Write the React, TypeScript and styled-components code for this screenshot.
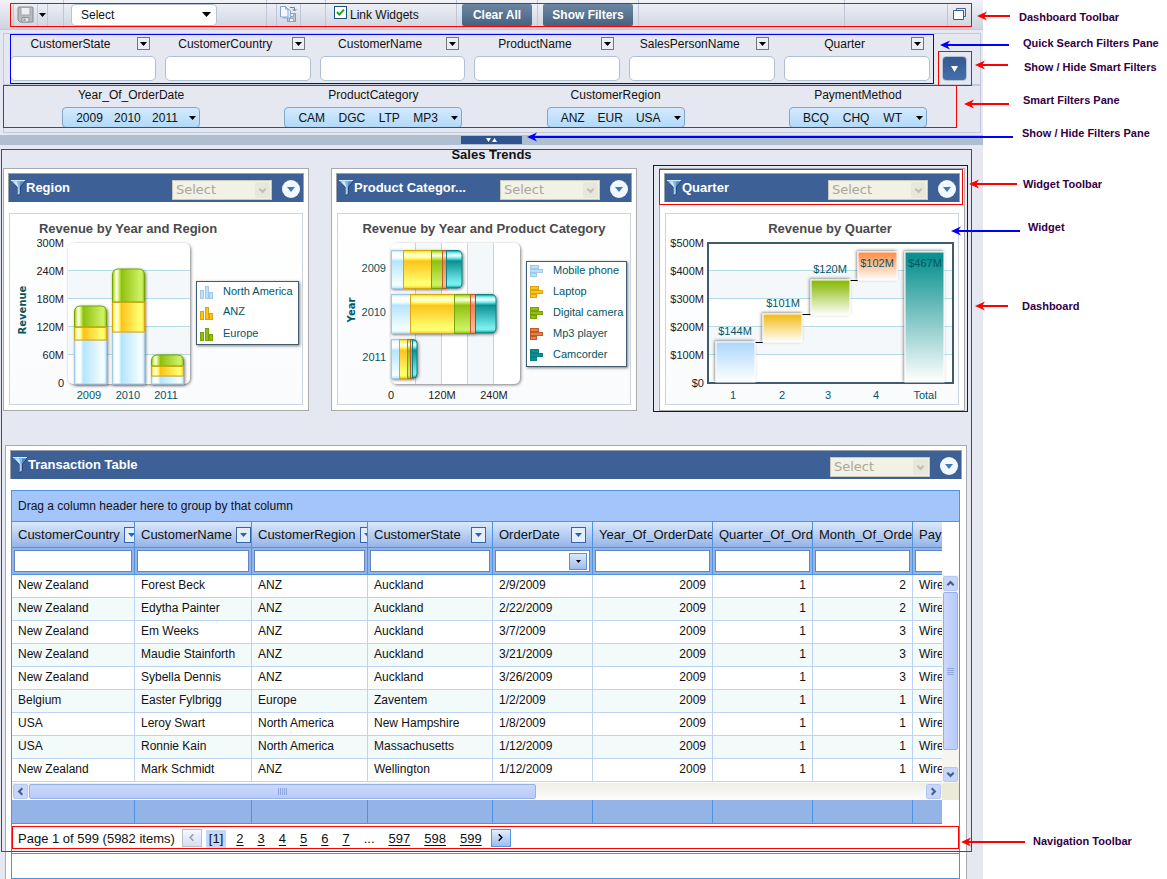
import React from 'react';
import styled, { createGlobalStyle, css } from 'styled-components';

const sans = '"Liberation Sans", Arial, sans-serif';
const wide = '"DejaVu Sans", Verdana, sans-serif';
const RED = '#ff0000';
const BLUE = '#0000ff';

const GlobalStyle = createGlobalStyle`
  *, *::before, *::after { box-sizing: border-box; }
  body { margin: 0; background: #fff; color: #111; font: 12px/16px ${sans}; }
  button, input, select { font: inherit; color: inherit; margin: 0; padding: 0; }
  button { cursor: pointer; }
  h1, h2 { margin: 0; font-weight: bold; }
`;

/* ---------- page frame ---------- */

const Page = styled.div`
  display: grid;
  grid-template-columns: minmax(0, 1fr) 184px;
`;

const Main = styled.main`
  background: #e6e8f1;
  min-width: 0;
`;

const Notes = styled.aside`
  position: relative;
`;

const Outline = styled.span<{ $color: string; $inset: string }>`
  position: absolute;
  inset: ${(p) => p.$inset};
  border: 1px solid ${(p) => p.$color};
  pointer-events: none;
  z-index: 2;
`;

const NoteText = styled.span<{ $x: number; $y: number }>`
  position: absolute;
  left: ${(p) => p.$x}px;
  top: ${(p) => p.$y - 8}px;
  font-size: 11px;
  font-weight: bold;
  color: #330044;
  white-space: nowrap;
`;

const ArrowSvg = styled.svg<{ $x: number; $y: number }>`
  position: absolute;
  left: ${(p) => p.$x}px;
  top: ${(p) => p.$y - 5}px;
  pointer-events: none;
  z-index: 3;
`;

/* ---------- toolbar ---------- */

const Toolbar = styled.header`
  position: relative;
  display: flex;
  align-items: center;
  height: 30px;
  padding-left: 13px;
  background: linear-gradient(#f2f3f8, #e2e5ee 45%, #cdd3e0);
  border-bottom: 1px solid #c3c8da;
`;

const Divider = styled.span<{ $l?: number; $r?: number }>`
  align-self: stretch;
  width: 1px;
  margin: 0 ${(p) => p.$r ?? 0}px 0 ${(p) => p.$l ?? 0}px;
  background: #c0c6d8;
`;

const Spacer = styled.span`
  flex: 1;
`;

const IconButton = styled.button<{ $w: number }>`
  display: flex;
  align-items: center;
  justify-content: center;
  width: ${(p) => p.$w}px;
  height: 22px;
  background: transparent;
  border: solid #c0c6d8;
  border-width: 0 1px 0 0;
`;

const IconGroup = styled.div`
  display: flex;
  border-left: 1px solid #c0c6d8;
`;

const WindowGroup = styled(IconGroup)`
  margin: 0 11px 0 102px;
`;

const SelectWrap = styled.div`
  display: grid;
  align-items: center;
  > * { grid-area: 1 / 1; }
  > svg, > span { justify-self: end; pointer-events: none; }
`;

const DashSelect = styled(SelectWrap)`
  width: 146px;
  > svg { margin-right: 6px; }
  select {
    appearance: none;
    width: 100%;
    height: 22px;
    padding-left: 9px;
    background: #fff;
    border: 1px solid #b8c2d6;
    border-radius: 4px;
  }
`;

const CheckLabel = styled.label`
  display: flex;
  align-items: center;
  gap: 3px;
  width: 122px;
`;

const CheckBox = styled.input`
  appearance: none;
  width: 13px;
  height: 13px;
  border: 1px solid #1c5180;
  background: #fff url("data:image/svg+xml,%3Csvg xmlns='http://www.w3.org/2000/svg' viewBox='0 0 11 11'%3E%3Cpath d='M2 5l2.3 2.6L9 2.6' fill='none' stroke='%2321a121' stroke-width='2'/%3E%3C/svg%3E") center / 11px 11px no-repeat;
  margin-bottom: 4px;
`;

const ActionButton = styled.button<{ $w: number }>`
  width: ${(p) => p.$w}px;
  height: 22px;
  border: 0;
  border-radius: 2px;
  background: linear-gradient(#6b87a4, #47627f);
  color: #fff;
  font-weight: bold;
`;

/* ---------- filters ---------- */

const FilterPane = styled.section`
  position: relative;
  height: 100px;
  margin: 3px 2px 2px 3px;
  border: 1px solid #c3c8da;
`;

const QuickRow = styled.div`
  display: flex;
  justify-content: space-between;
  align-items: flex-end;
  height: 52px;
  padding: 0 13px 3px 6px;
  border-bottom: 2px solid #c3c8da;
`;

const QuickFields = styled.div`
  display: grid;
  flex: 1;
  grid-template-columns: repeat(6, minmax(0, 1fr));
  gap: 9px;
  margin-right: 12px;
`;

const FieldHead = styled.div`
  display: flex;
  align-items: center;
  height: 16px;
  margin-bottom: 4px;
  padding-right: 6px;
  label { flex: 1; text-align: center; padding-right: 6px; }
`;

const BoxButton = styled.button`
  display: flex;
  align-items: center;
  justify-content: center;
  width: 13px;
  height: 13px;
  margin-bottom: 1px;
  border: 1px solid #777;
  background: #eceef5;
`;

const QuickInput = styled.input`
  display: block;
  width: 100%;
  height: 25px;
  padding: 0 6px;
  border: 1px solid #afc0d2;
  border-radius: 5px;
  background: #fff;
`;

const ToggleWrap = styled.div`
  position: relative;
`;

const ToggleButton = styled.button`
  display: flex;
  align-items: center;
  justify-content: center;
  width: 25px;
  height: 25px;
  border: 1px solid #b4c2d8;
  border-radius: 4px;
  background: linear-gradient(#35588f, #456fab);
`;

const SmartRow = styled.div`
  display: grid;
  grid-template-columns: repeat(4, minmax(0, 1fr));
  padding: 0 1px 0 6px;
`;

const SmartFilter = styled.div`
  display: flex;
  flex-direction: column;
  align-items: center;
  gap: 4px;
  padding-top: 1px;
`;

const Pill = styled.button<{ $w: number }>`
  display: flex;
  align-items: center;
  justify-content: space-between;
  width: ${(p) => p.$w}px;
  height: 21px;
  padding: 0 3px 0 13px;
  border: 1px solid #7fa6cc;
  border-radius: 4px;
  background: linear-gradient(#d3eaff, #b3d9f8);
`;

const Splitter = styled.div`
  display: flex;
  justify-content: center;
  align-items: center;
  height: 10px;
  background: #aebfd0;
`;

const SplitHandle = styled.button`
  display: flex;
  justify-content: center;
  align-items: center;
  width: 61px;
  height: 8px;
  border: 0;
  background: #2f5490;
`;

/* ---------- widgets ---------- */

const Dashboard = styled.section`
  position: relative;
`;

const DashTitle = styled.h1`
  height: 23px;
  padding-top: 2px;
  font-size: 13px;
  line-height: 16px;
  text-align: center;
`;

const WidgetRow = styled.div`
  display: grid;
  grid-template-columns: repeat(3, minmax(0, 1fr));
  gap: 22px;
  padding: 0 18px 34px 3px;
`;

const WidgetBox = styled.article`
  position: relative;
  min-width: 0;
  padding: 4px 4px 5px;
  border: 1px solid #aaa;
  background: #fff;
`;

const WidgetHead = styled.div`
  display: flex;
  align-items: center;
  height: 29px;
  margin-bottom: 11px;
  padding: 0 3px 0 2px;
  border: solid #9aa0aa;
  border-width: 1px 1px 0 1px;
  background: #3d6096;
  color: #fff;
`;

const WidgetTitle = styled.h2`
  flex: 1;
  font-size: 13px;
  line-height: 18px;
  white-space: nowrap;
`;

const DisabledSelect = styled(SelectWrap)`
  width: 100px;
  margin: 4px 10px 0 0;
  select {
    appearance: none;
    width: 100%;
    height: 20px;
    padding-left: 3px;
    border: 1px solid #c9c7ba;
    border-radius: 0;
    background: #f2f1e6;
    color: #aca899;
    opacity: 1;
    font-family: ${wide};
    font-size: 13px;
  }
  > span {
    display: flex;
    align-items: center;
    justify-content: center;
    width: 15px;
    height: 16px;
    margin-right: 2px;
    background: #e8e7dc;
    border-radius: 2px;
  }
`;

const RoundButton = styled.button`
  display: flex;
  align-items: center;
  justify-content: center;
  width: 18px;
  height: 18px;
  margin-top: 2px;
  border: 0;
  border-radius: 50%;
  background: #f1f8ff;
`;

const ChartPanel = styled.div`
  height: 192px;
  margin: 0 1px;
  border: 1px solid #cbd3dc;
  background: linear-gradient(#fff, #fafbfd);
  svg { display: block; }
`;

/* ---------- transaction grid ---------- */

const TableWidget = styled(WidgetBox)`
  margin: 0 16px 0 5px;
  padding-bottom: 0;
  border-bottom: 0;
`;

const Grid = styled.div`
  position: relative;
  margin: 0 2px 0 1px;
  border: 1px solid #4d92e3;
`;

const GroupPanel = styled.div`
  display: flex;
  align-items: center;
  height: 31px;
  padding-left: 6px;
  border-bottom: 1px solid #4d92e3;
  background: #a4c5fa;
`;

const GridArea = styled.div`
  display: grid;
  grid-template-columns: minmax(0, 1fr) 17px;
`;

const TableClip = styled.div`
  overflow: hidden;
  height: 261px;
`;

const Table = styled.table`
  width: 100%;
  min-width: 931px;
  table-layout: fixed;
  border-collapse: separate;
  border-spacing: 0;
`;

const HeadCell = styled.th`
  height: 26px;
  padding: 0;
  border: solid #4d92e3;
  border-width: 0 1px 1px 0;
  background: linear-gradient(#dbe9fb, #94b4e8);
  font-weight: normal;
  font-size: 13px;
  text-align: left;
  &:last-child { border-right: 0; }
`;

const HeadInner = styled.div`
  display: flex;
  align-items: center;
  gap: 4px;
  overflow: hidden;
  padding: 0 6px;
  white-space: nowrap;
`;

const HeadButton = styled.button`
  display: flex;
  flex: none;
  align-items: center;
  justify-content: center;
  width: 15px;
  height: 16px;
  margin-left: auto;
  border: 1px solid #3564ac;
  background: #e3eefd;
`;

const FilterCell = styled.td`
  height: 27px;
  padding: 2px;
  border: solid #4d92e3;
  border-width: 0 1px 1px 0;
  background: #94b4e8;
  &:last-child { border-right: 0; padding-right: 0; }
`;

const FilterBox = styled.div<{ $open?: boolean }>`
  display: flex;
  align-items: center;
  height: 22px;
  padding-right: 2px;
  border: 1px solid #5f86c9;
  ${(p) => p.$open && css`border-right: 0;`}
  background: #fff;
  input { flex: 1; min-width: 0; width: 0; height: 18px; border: 0; outline: 0; background: none; }
`;

const DateButton = styled.button`
  display: flex;
  align-items: center;
  justify-content: center;
  width: 18px;
  height: 17px;
  border: 1px solid #5f8fd6;
  background: linear-gradient(#dbe9fb, #9dbdf0);
`;

const Row = styled.tr<{ $alt: boolean }>`
  background: ${(p) => (p.$alt ? '#f3fafa' : '#fff')};
`;

const Cell = styled.td<{ $num?: boolean }>`
  height: 23px;
  padding: 0 6px 1px;
  border: solid #bdd3f2;
  border-width: 0 1px 1px 0;
  line-height: 21px;
  white-space: nowrap;
  overflow: hidden;
  text-align: ${(p) => (p.$num ? 'right' : 'left')};
  &:last-child { border-right: 0; }
`;

const VBar = styled.div`
  display: flex;
  flex-direction: column;
  align-items: center;
  height: 208px;
  margin-top: 53px;
  padding: 1px 0;
  background: #f6f5f0;
`;

const HBar = styled.div`
  display: flex;
  align-items: center;
  height: 17px;
  padding: 0 1px;
  background: linear-gradient(#eeede5, #fdfdfb);
`;

const ScrollButton = styled.button`
  display: flex;
  flex: none;
  align-items: center;
  justify-content: center;
  width: 15px;
  height: 15px;
  border: 1px solid #b5c7f2;
  border-radius: 2px;
  background: #c8d6fb;
`;

const HThumb = styled.div`
  display: flex;
  align-items: center;
  justify-content: center;
  gap: 1px;
  width: 507px;
  height: 15px;
  margin: 0 auto 0 1px;
  border: 1px solid #98b0e4;
  border-radius: 2px;
  background: linear-gradient(#cad8fd, #b7cbf8);
  i { width: 1px; height: 7px; background: #8fa9e0; }
`;

const VThumb = styled.div`
  display: flex;
  flex-direction: column;
  align-items: center;
  justify-content: center;
  gap: 1px;
  width: 15px;
  height: 158px;
  margin: 1px 0 auto;
  border: 1px solid #98b0e4;
  border-radius: 2px;
  background: linear-gradient(90deg, #cad8fd, #b7cbf8);
  i { width: 7px; height: 1px; background: #8fa9e0; }
`;

const Corner = styled.div`
  background: #ece9d8;
`;

const FootRow = styled.div`
  display: flex;
  overflow: hidden;
  height: 24px;
  border-bottom: 1px solid #4d92e3;
  background: #94b4e8;
`;

const FootCell = styled.span<{ $w: number }>`
  flex: none;
  width: ${(p) => p.$w}px;
  border-right: 1px solid #4d92e3;
`;

const Pager = styled.nav`
  position: relative;
  display: flex;
  align-items: center;
  height: 30px;
  padding: 0 6px;
  border-bottom: 1px solid #4d92e3;
  font-size: 13px;
`;

const PageStatus = styled.span`
  margin-right: 7px;
`;

const PageLinks = styled.div`
  display: flex;
  margin: 1px 2px 0 4px;
  line-height: 18px;
`;

const PageLink = styled.a`
  padding: 0 7px;
  color: #111;
  text-decoration: underline;
  text-underline-offset: 2px;
`;

const PageGap = styled.span`
  padding: 0 7px;
`;

const CurrentPage = styled.b`
  margin-right: 3px;
  padding: 0 3px;
  font-weight: normal;
  background: #c3d8f8;
`;

const PageButton = styled.button`
  display: flex;
  align-items: center;
  justify-content: center;
  width: 20px;
  height: 18px;
  margin-bottom: 2px;
  border: 1px solid #5a93dd;
  background: linear-gradient(#e3effd, #9dbdf0);
  &:disabled { border-color: #c0c0c0; background: linear-gradient(#f4f8fe, #d3dff2); }
`;

const BottomBar = styled.div`
  height: 24px;
`;

/* ---------- small drawings ---------- */

const Tri = ({ c = '#000', w = 7, h = 4 }: { c?: string; w?: number; h?: number }) => (
  <svg width={w} height={h} viewBox="0 0 7 4" preserveAspectRatio="none" aria-hidden>
    <path d="M0 0h7L3.500 4z" fill={c} />
  </svg>
);

const Chevron = ({ turn = 0, c = '#44608f', s = 9, w = 2.4 }: { turn?: number; c?: string; s?: number; w?: number }) => (
  <svg width={s} height={s} viewBox="0 0 10 10" aria-hidden>
    <path d="M1.500 3l3.500 3.500L8.500 3" fill="none" stroke={c} strokeWidth={w} transform={`rotate(${turn} 5 5)`} />
  </svg>
);

const Funnel = () => (
  <svg width="15" height="16" viewBox="0 0 15 16" aria-hidden>
    <path d="M1 1h13.500L9.500 7.500V14L6.500 16V8z" fill="#1b2f4e" />
    <path d="M0 0.500h14L9 7v7l-2.500 1V7z" fill="#7fb8ee" />
    <path d="M2 1.500h4l1.500 5.500v7l-0.500 0.500V7.500z" fill="#c9e6ff" />
    <path d="M9.500 1.500h3.500L8.500 7z" fill="#4a83c2" />
    <path d="M0 0.500h14" stroke="#d5ecff" />
  </svg>
);

const SaveIcon = () => (
  <svg width="17" height="17" viewBox="0 0 17 17" aria-hidden>
    <path d="M1 2q0-1 1-1h13q1 0 1 1v14H3l-2-2z" fill="#b9bbbe" stroke="#85888c" />
    <path d="M4 1.500h9v7.500H4z" fill="#eceef0" stroke="#a1a4a8" />
    <path d="M5 11.500h7V16H5z" fill="#e2e4e7" stroke="#909397" />
    <path d="M6.500 12.500h2V15h-2z" fill="#9a9da1" />
  </svg>
);

const CopyIcon = () => (
  <svg width="17" height="17" viewBox="0 0 17 17" aria-hidden>
    <path d="M7.500 7.500h8v8h-8z" fill="#c3c8d0" stroke="#8e99ab" />
    <path d="M9.500 7.500h4v3h-4zM9.500 12.500h4v3h-4z" fill="#f2f4f8" stroke="#98a3b5" />
    <path d="M3.500 2.500h4.500l2.500 2.500v7h-7z" fill="#e4f0ff" stroke="#86a5cf" />
    <path d="M0.500 0.500h5l2.500 2.500v8h-7.500z" fill="#f4f9ff" stroke="#86a5cf" />
    <path d="M5.500 0.500v2.500h2.500" fill="none" stroke="#86a5cf" />
    <path d="M10 1.500h4.500v3M12.500 3l2 2 2-2" fill="none" stroke="#5f86ba" />
  </svg>
);

const WindowsIcon = () => (
  <svg width="14" height="13" viewBox="0 0 14 13" aria-hidden>
    <path d="M3.500 2.500v-2h9v8h-2" fill="none" stroke="#46658f" />
    <path d="M0.500 2.500h10v9h-10z" fill="#fff" stroke="#3b5c8a" />
  </svg>
);

const Arrow = ({ x, y, w, c }: { x: number; y: number; w: number; c: string }) => (
  <ArrowSvg $x={x} $y={y} width={w} height={10} viewBox={`0 0 ${w} 10`} aria-hidden>
    <path d={`M5 5H${w}`} stroke={c} strokeWidth={2} />
    <path d="M0 5L10 0.500L7 5L10 9.500z" fill={c} />
  </ArrowSvg>
);

/* ---------- charts ---------- */

const AXIS = { fontSize: 11, fontFamily: sans, fill: '#222' } as const;
const TEAL = { fontSize: 11, fontFamily: sans, fill: '#045664' } as const;

const ChartHeading = ({ x, children }: { x: number; children: string }) => (
  <text x={x} y={19} textAnchor="middle" fontFamily={sans} fontWeight="bold" fontSize={13} fill="#4a4a4a">
    {children}
  </text>
);

type Hue = { id: string; edge: string; dark: string; light: string };
const HUES: Hue[] = [
  { id: 'sky', edge: '#a3c8e8', dark: '#b5e4ff', light: '#f2fdff' },
  { id: 'gold', edge: '#dba60c', dark: '#ffc31a', light: '#ffff70' },
  { id: 'lime', edge: '#77a305', dark: '#8fc010', light: '#cbf060' },
  { id: 'coral', edge: '#c05a28', dark: '#e5804e', light: '#ffb894' },
  { id: 'sea', edge: '#0b8080', dark: '#0a9090', light: '#78eeee' },
];

const BarDefs = ({ name, vertical }: { name: string; vertical?: boolean }) => (
  <defs>
    {HUES.map((h) => (
      <linearGradient key={h.id} id={`${name}-${h.id}`} x1="0" y1="0" x2={vertical ? 0 : 1} y2={vertical ? 1 : 0}>
        <stop offset="0" stopColor={h.dark} />
        <stop offset="0.06" stopColor={h.light} />
        <stop offset="0.13" stopColor="#fff" />
        <stop offset="0.2" stopColor={h.light} />
        <stop offset="0.28" stopColor={h.dark} />
        <stop offset="0.85" stopColor={h.light} />
        <stop offset="0.92" stopColor={h.light} />
        <stop offset="1" stopColor={h.dark} />
      </linearGradient>
    ))}
    <filter id={`${name}-shadow`} x="-20%" y="-20%" width="140%" height="140%">
      <feDropShadow dx="1" dy="1" stdDeviation="1.5" floodColor="#000" floodOpacity="0.5" />
    </filter>
  </defs>
);

const REGION_BARS = [
  { x: 64, cuts: [170, 126, 113, 92], label: '2009', tx: 79 },
  { x: 102, cuts: [170, 118, 88, 55], label: '2010', tx: 118 },
  { x: 141, cuts: [170, 162, 152, 141], label: '2011', tx: 156 },
];

const ColumnsMark = ({ x, y, hue }: { x: number; y: number; hue: Hue }) => (
  <g fill={hue.dark} stroke={hue.edge}>
    <rect x={x + 0.5} y={y - 2.5} width={3} height={8} />
    <rect x={x + 5.5} y={y - 6.5} width={3} height={12} />
    <rect x={x + 9.5} y={y - 0.5} width={3} height={6} />
  </g>
);

const RegionChart = () => (
  <svg width="292" height="190" viewBox="0 0 292 190" role="img" aria-label="Revenue by Year and Region">
    <BarDefs name="rc" />
    <ChartHeading x={118}>Revenue by Year and Region</ChartHeading>
    <rect x={58} y={29} width={122} height={141} rx={6} fill="#fff" filter="url(#rc-shadow)" />
    {[57, 113].map((y) => <rect key={y} x={58} y={y} width={122} height={28} fill="#f4f8fa" />)}
    {[56.5, 84.5, 112.5, 140.5].map((y) => <path key={y} d={`M58 ${y}H180`} stroke="#b3dce4" />)}
    {['300M', '240M', '180M', '120M', '60M', '0'].map((t, i) => (
      <text key={t} {...AXIS} x={54} y={33 + i * 28} textAnchor="end">{t}</text>
    ))}
    <text {...TEAL} fontWeight="bold" fontFamily={wide} fontSize={10} textAnchor="middle" transform="translate(16 96) rotate(-90)">Revenue</text>
    {REGION_BARS.map((b) => {
      const [base, c1, c2, top] = b.cuts;
      return (
        <g key={b.label}>
          <g filter="url(#rc-shadow)">
            <rect x={b.x + 0.5} y={c1} width={32} height={base - c1} fill="url(#rc-sky)" stroke={HUES[0].edge} />
            <rect x={b.x + 0.5} y={c2} width={32} height={c1 - c2} fill="url(#rc-gold)" stroke={HUES[1].edge} />
            <path
              d={`M${b.x + 0.5} ${c2}V${top + 6}q0 -6 6 -6h20q6 0 6 6V${c2}z`}
              fill="url(#rc-lime)"
              stroke={HUES[2].edge}
            />
            <path d={`M${b.x} ${c2}h33`} stroke={HUES[1].edge} />
          </g>
          <text {...TEAL} x={b.tx} y={185} textAnchor="middle">{b.label}</text>
        </g>
      );
    })}
    <rect x={186.5} y={67.5} width={102} height={63} fill="#fff" stroke="#3f5b73" filter="url(#rc-shadow)" />
    {['North America', 'ANZ', 'Europe'].map((t, i) => (
      <g key={t}>
        <ColumnsMark x={190} y={[79, 100, 121][i]} hue={HUES[i]} />
        <text {...TEAL} x={213} y={[81, 101, 123][i]}>{t}</text>
      </g>
    ))}
  </svg>
);

const PRODUCT_BARS = [
  { y: 36, h: 38, cuts: [53, 65, 93, 104, 108, 124], label: '2009' },
  { y: 80, h: 39, cuts: [53, 72, 116, 132, 137, 158], label: '2010' },
  { y: 125, h: 39, cuts: [53, 61, 69, 72, 74, 79], label: '2011' },
];

const ProductChart = () => (
  <svg width="292" height="190" viewBox="0 0 292 190" role="img" aria-label="Revenue by Year and Product Category">
    <BarDefs name="pc" vertical />
    <ChartHeading x={146}>Revenue by Year and Product Category</ChartHeading>
    <rect x={53} y={29} width={129} height={141} rx={6} fill="#fff" filter="url(#pc-shadow)" />
    {[78, 130].map((x) => <rect key={x} x={x} y={29} width={25} height={141} fill="#f4f8fa" />)}
    {[77.5, 103.5, 129.5, 155.5].map((x) => <path key={x} d={`M${x} 29V170`} stroke="#b3dce4" />)}
    {PRODUCT_BARS.map((b) => {
      const end = b.cuts[5];
      const r = Math.min(5, end - b.cuts[4] - 1);
      return (
        <g key={b.label}>
          <g filter="url(#pc-shadow)">
            {HUES.slice(0, 4).map((h, i) => (
              <rect key={h.id} x={b.cuts[i] + 0.5} y={b.y + 0.5} width={b.cuts[i + 1] - b.cuts[i]} height={b.h} fill={`url(#pc-${h.id})`} stroke={h.edge} />
            ))}
            <path
              d={`M${b.cuts[4] + 0.5} ${b.y + 0.5}H${end - r}q${r} 0 ${r} ${r}V${b.y + b.h - r}q0 ${r} ${-r} ${r}H${b.cuts[4] + 0.5}z`}
              fill="url(#pc-sea)"
              stroke={HUES[4].edge}
            />
          </g>
          <text {...TEAL} x={48} y={b.y + 22} textAnchor="end">{b.label}</text>
        </g>
      );
    })}
    <text {...TEAL} fontWeight="bold" fontFamily={wide} fontSize={10} textAnchor="middle" transform="translate(17 96) rotate(-90)">Year</text>
    {['0', '120M', '240M'].map((t, i) => (
      <text key={t} {...AXIS} x={[53, 104, 156][i]} y={185} textAnchor="middle">{t}</text>
    ))}
    <rect x={188.5} y={47.5} width={100} height={105} fill="#fff" stroke="#3f5b73" filter="url(#pc-shadow)" />
    {['Mobile phone', 'Laptop', 'Digital camera', 'Mp3 player', 'Camcorder'].map((t, i) => (
      <g key={t}>
        <g fill={HUES[i].dark} stroke={HUES[i].edge}>
          <rect x={192.5} y={51.5 + i * 21} width={8} height={3} />
          <rect x={192.5} y={55.5 + i * 21} width={12} height={3} />
          <rect x={192.5} y={59.5 + i * 21} width={6} height={3} />
        </g>
        <text {...TEAL} x={215} y={60 + i * 21}>{t}</text>
      </g>
    ))}
  </svg>
);

const STEPS = [
  { x: 50, top: 128, bottom: 168, c: '#b0d8fa', label: '$144M', tx: 69, ty: 121, name: '1', nx: 67 },
  { x: 97, top: 100, bottom: 128, c: '#f3bd1c', label: '$101M', tx: 117, ty: 93, name: '2', nx: 116 },
  { x: 145, top: 66, bottom: 101, c: '#8aba08', label: '$120M', tx: 164, ty: 59, name: '3', nx: 162 },
  { x: 192, top: 38, bottom: 66, c: '#ff8f4d', label: '$102M', tx: 211, ty: 53, name: '4', nx: 210 },
  { x: 239, top: 38, bottom: 168, c: '#0a9190', label: '$467M', tx: 259, ty: 53, name: 'Total', nx: 259 },
];

const QuarterChart = () => (
  <svg width="292" height="190" viewBox="0 0 292 190" role="img" aria-label="Revenue by Quarter">
    <defs>
      {STEPS.map((s) => (
        <linearGradient key={s.name} id={`qc-${s.name}`} x1="0" y1="0" x2="0" y2="1">
          <stop offset="0.05" stopColor={s.c} />
          <stop offset="1" stopColor="#fff" />
        </linearGradient>
      ))}
      <filter id="qc-shadow" x="-20%" y="-20%" width="140%" height="140%">
        <feDropShadow dx="-1" dy="-1" stdDeviation="1.5" floodColor="#000" floodOpacity="0.5" />
      </filter>
    </defs>
    <ChartHeading x={164}>Revenue by Quarter</ChartHeading>
    <rect x={42} y={29} width={245} height={140} fill="#fff" stroke="#3f5b6f" strokeWidth={2} />
    {[57, 113].map((y) => <rect key={y} x={43} y={y} width={243} height={28} fill="#f4f8fa" />)}
    {[56.5, 84.5, 112.5, 140.5].map((y) => <path key={y} d={`M43 ${y}H286`} stroke="#b3dce4" />)}
    {['$500M', '$400M', '$300M', '$200M', '$100M', '$0'].map((t, i) => (
      <text key={t} {...AXIS} x={38} y={33 + i * 28} textAnchor="end">{t}</text>
    ))}
    <path d="M89 128.500h8M136 100.500h9M184 66.500h8" stroke="#000" />
    {STEPS.map((s) => (
      <g key={s.name}>
        <rect x={s.x} y={s.top} width={39} height={s.bottom - s.top} fill={`url(#qc-${s.name})`} stroke="#fff" filter="url(#qc-shadow)" />
        <text {...TEAL} x={s.tx} y={s.ty} textAnchor="middle">{s.label}</text>
        <text {...TEAL} x={s.nx} y={185} textAnchor="middle">{s.name}</text>
      </g>
    ))}
  </svg>
);

/* ---------- data ---------- */

const QUICK = ['CustomerState', 'CustomerCountry', 'CustomerName', 'ProductName', 'SalesPersonName', 'Quarter'];

const SMART = [
  { title: 'Year_Of_OrderDate', items: ['2009', '2010', '2011'], w: 138 },
  { title: 'ProductCategory', items: ['CAM', 'DGC', 'LTP', 'MP3'], w: 178 },
  { title: 'CustomerRegion', items: ['ANZ', 'EUR', 'USA'], w: 138 },
  { title: 'PaymentMethod', items: ['BCQ', 'CHQ', 'WT'], w: 138 },
];

const COLUMNS = [
  { name: 'CustomerCountry', w: 123, menu: true },
  { name: 'CustomerName', w: 117, menu: true },
  { name: 'CustomerRegion', w: 116, menu: true },
  { name: 'CustomerState', w: 125, menu: true },
  { name: 'OrderDate', w: 100, menu: true },
  { name: 'Year_Of_OrderDate', w: 120 },
  { name: 'Quarter_Of_OrderDate', w: 100 },
  { name: 'Month_Of_OrderDate', w: 100 },
  { name: 'PaymentMethod', w: 0 },
];

const ROWS: string[][] = [
  ['New Zealand', 'Forest Beck', 'ANZ', 'Auckland', '2/9/2009', '2009', '1', '2'],
  ['New Zealand', 'Edytha Painter', 'ANZ', 'Auckland', '2/22/2009', '2009', '1', '2'],
  ['New Zealand', 'Em Weeks', 'ANZ', 'Auckland', '3/7/2009', '2009', '1', '3'],
  ['New Zealand', 'Maudie Stainforth', 'ANZ', 'Auckland', '3/21/2009', '2009', '1', '3'],
  ['New Zealand', 'Sybella Dennis', 'ANZ', 'Auckland', '3/26/2009', '2009', '1', '3'],
  ['Belgium', 'Easter Fylbrigg', 'Europe', 'Zaventem', '1/2/2009', '2009', '1', '1'],
  ['USA', 'Leroy Swart', 'North America', 'New Hampshire', '1/8/2009', '2009', '1', '1'],
  ['USA', 'Ronnie Kain', 'North America', 'Massachusetts', '1/12/2009', '2009', '1', '1'],
  ['New Zealand', 'Mark Schmidt', 'ANZ', 'Wellington', '1/12/2009', '2009', '1', '1'],
];

const NOTES = [
  { text: 'Dashboard Toolbar', x: 36, y: 17, ax: -6, ay: 16, aw: 33, c: RED },
  { text: 'Quick Search Filters Pane', x: 40, y: 43, ax: -43, ay: 45, aw: 69, c: BLUE },
  { text: 'Show / Hide Smart Filters', x: 41, y: 67, ax: -8, ay: 65, aw: 33, c: RED },
  { text: 'Smart Filters Pane', x: 40, y: 100, ax: -19, ay: 104, aw: 45, c: RED },
  { text: 'Show / Hide Filters Pane', x: 39, y: 133, ax: -456, ay: 137, aw: 486, c: BLUE },
  { text: 'Widget Toolbar', x: 40, y: 184, ax: -14, ay: 184, aw: 48, c: RED },
  { text: 'Widget', x: 45, y: 227, ax: -32, ay: 231, aw: 69, c: BLUE },
  { text: 'Dashboard', x: 39, y: 306, ax: -8, ay: 306, aw: 33, c: RED },
  { text: 'Navigation Toolbar', x: 50, y: 841, ax: -22, ay: 842, aw: 64, c: RED },
];

/* ---------- parts ---------- */

const WidgetBar = ({ title }: { title: string }) => (
  <WidgetHead>
    <Funnel />
    <WidgetTitle>{title}</WidgetTitle>
    <DisabledSelect>
      <select disabled aria-label={`${title} view`}>
        <option>Select</option>
      </select>
      <span><Chevron c="#c2c0b4" /></span>
    </DisabledSelect>
    <RoundButton aria-label={`${title} menu`}><Tri c="#3c7dbd" w={8} h={5} /></RoundButton>
  </WidgetHead>
);

const TransactionGrid = () => (
  <Grid>
    <GroupPanel>Drag a column header here to group by that column</GroupPanel>
    <GridArea>
      <TableClip>
        <Table>
          <colgroup>
            {COLUMNS.map((c) => <col key={c.name} style={c.w ? { width: c.w } : undefined} />)}
          </colgroup>
          <thead>
            <tr>
              {COLUMNS.map((c) => (
                <HeadCell key={c.name} scope="col">
                  <HeadInner>
                    {c.name}
                    {c.menu && <HeadButton aria-label={`Filter ${c.name}`}><Tri c="#2f62ad" /></HeadButton>}
                  </HeadInner>
                </HeadCell>
              ))}
            </tr>
            <tr>
              {COLUMNS.map((c) => (
                <FilterCell key={c.name}>
                  <FilterBox $open={!c.w}>
                    <input aria-label={`${c.name} value`} />
                    {c.name === 'OrderDate' && <DateButton aria-label="Pick a date"><Tri w={5} h={3} /></DateButton>}
                  </FilterBox>
                </FilterCell>
              ))}
            </tr>
          </thead>
          <tbody>
            {ROWS.map((r, i) => (
              <Row key={i} $alt={i % 2 === 1}>
                {r.map((v, j) => <Cell key={j} $num={j > 4}>{v}</Cell>)}
                <Cell>Wire Transfer</Cell>
              </Row>
            ))}
          </tbody>
        </Table>
      </TableClip>
      <VBar>
        <ScrollButton aria-label="Scroll up"><Chevron turn={180} /></ScrollButton>
        <VThumb><i /><i /><i /><i /></VThumb>
        <ScrollButton aria-label="Scroll down"><Chevron /></ScrollButton>
      </VBar>
      <HBar>
        <ScrollButton aria-label="Scroll left"><Chevron turn={90} /></ScrollButton>
        <HThumb><i /><i /><i /><i /><i /></HThumb>
        <ScrollButton aria-label="Scroll right"><Chevron turn={-90} /></ScrollButton>
      </HBar>
      <Corner />
      <FootRow>
        {COLUMNS.filter((c) => c.w).map((c) => <FootCell key={c.name} $w={c.w} />)}
      </FootRow>
    </GridArea>
    <Pager aria-label="Pages">
      <PageStatus>Page 1 of 599 (5982 items)</PageStatus>
      <PageButton disabled aria-label="Previous page">
        <Chevron turn={90} c="#9a9a9a" w={1.6} />
      </PageButton>
      <PageLinks>
        <CurrentPage>[1]</CurrentPage>
        {['2', '3', '4', '5', '6', '7'].map((n) => <PageLink key={n} href={`#page-${n}`}>{n}</PageLink>)}
        <PageGap>...</PageGap>
        {['597', '598', '599'].map((n) => <PageLink key={n} href={`#page-${n}`}>{n}</PageLink>)}
      </PageLinks>
      <PageButton aria-label="Next page"><Chevron turn={-90} c="#000" w={1.6} /></PageButton>
      <Outline $color={RED} $inset="2px 0 4px 0" />
    </Pager>
    <BottomBar />
  </Grid>
);

export default function App() {
  return (
    <>
      <GlobalStyle />
      <Page>
        <Main>
          <Toolbar>
            <IconGroup>
              <IconButton $w={24} aria-label="Save"><SaveIcon /></IconButton>
              <IconButton $w={10} aria-label="Save options"><Tri /></IconButton>
            </IconGroup>
            <Divider $l={15} $r={7} />
            <DashSelect>
              <select aria-label="Dashboard"><option>Select</option></select>
              <Tri w={9} h={5} />
            </DashSelect>
            <Divider $l={49} $r={9} />
            <IconGroup>
              <IconButton $w={24} aria-label="Copy layout"><CopyIcon /></IconButton>
            </IconGroup>
            <Divider $l={24} $r={8} />
            <CheckLabel>
              <CheckBox type="checkbox" defaultChecked />
              Link Widgets
            </CheckLabel>
            <Divider $r={5} />
            <ActionButton $w={70}>Clear All</ActionButton>
            <Divider $l={5} $r={5} />
            <ActionButton $w={90}>Show Filters</ActionButton>
            <Divider $l={5} />
            <Spacer />
            <Divider />
            <WindowGroup>
              <IconButton $w={24} aria-label="Restore window"><WindowsIcon /></IconButton>
            </WindowGroup>
            <Outline $color={RED} $inset="3px 11px 2px 10px" />
          </Toolbar>

          <FilterPane>
            <QuickRow>
              <QuickFields>
                {QUICK.map((q) => (
                  <div key={q}>
                    <FieldHead>
                      <label htmlFor={`quick-${q}`}>{q}</label>
                      <BoxButton aria-label={`${q} options`}><Tri /></BoxButton>
                    </FieldHead>
                    <QuickInput id={`quick-${q}`} />
                  </div>
                ))}
              </QuickFields>
              <ToggleWrap>
                <ToggleButton aria-label="Toggle smart filters"><Tri c="#fff" w={7} h={6} /></ToggleButton>
                <Outline $color={RED} $inset="-5px -5px -5px -4px" />
              </ToggleWrap>
            </QuickRow>
            <SmartRow>
              {SMART.map((s) => (
                <SmartFilter key={s.title}>
                  <span>{s.title}</span>
                  <Pill $w={s.w} aria-label={s.title}>
                    {s.items.map((i) => <span key={i}>{i}</span>)}
                    <Tri w={7} h={4} />
                  </Pill>
                </SmartFilter>
              ))}
            </SmartRow>
            <Outline $color={BLUE} $inset="0 46px 48px 6px" />
            <Outline $color={RED} $inset="51px 23px 4px -1px" />
          </FilterPane>

          <Splitter>
            <SplitHandle aria-label="Toggle filters pane">
              <svg width="11" height="4" viewBox="0 0 11 4" aria-hidden>
                <path d="M0 0h5L2.500 4zM6 4h5L8.500 0z" fill="#fff" />
              </svg>
            </SplitHandle>
          </Splitter>

          <Dashboard>
            <DashTitle>Sales Trends</DashTitle>
            <WidgetRow>
              <WidgetBox>
                <WidgetBar title="Region" />
                <ChartPanel><RegionChart /></ChartPanel>
              </WidgetBox>
              <WidgetBox>
                <WidgetBar title="Product Categor..." />
                <ChartPanel><ProductChart /></ChartPanel>
              </WidgetBox>
              <WidgetBox>
                <WidgetBar title="Quarter" />
                <ChartPanel><QuarterChart /></ChartPanel>
                <Outline $color={BLUE} $inset="-4px -4px -2px -7px" />
                <Outline $color={RED} $inset="0 1px 205px -1px" />
              </WidgetBox>
            </WidgetRow>
            <TableWidget>
              <WidgetBar title="Transaction Table" />
              <TransactionGrid />
            </TableWidget>
            <Outline $color={RED} $inset="4px 11px 27px 1px" />
          </Dashboard>
        </Main>

        <Notes>
          {NOTES.map((n) => (
            <React.Fragment key={n.text}>
              <Arrow x={n.ax} y={n.ay} w={n.aw} c={n.c} />
              <NoteText $x={n.x} $y={n.y}>{n.text}</NoteText>
            </React.Fragment>
          ))}
        </Notes>
      </Page>
    </>
  );
}
